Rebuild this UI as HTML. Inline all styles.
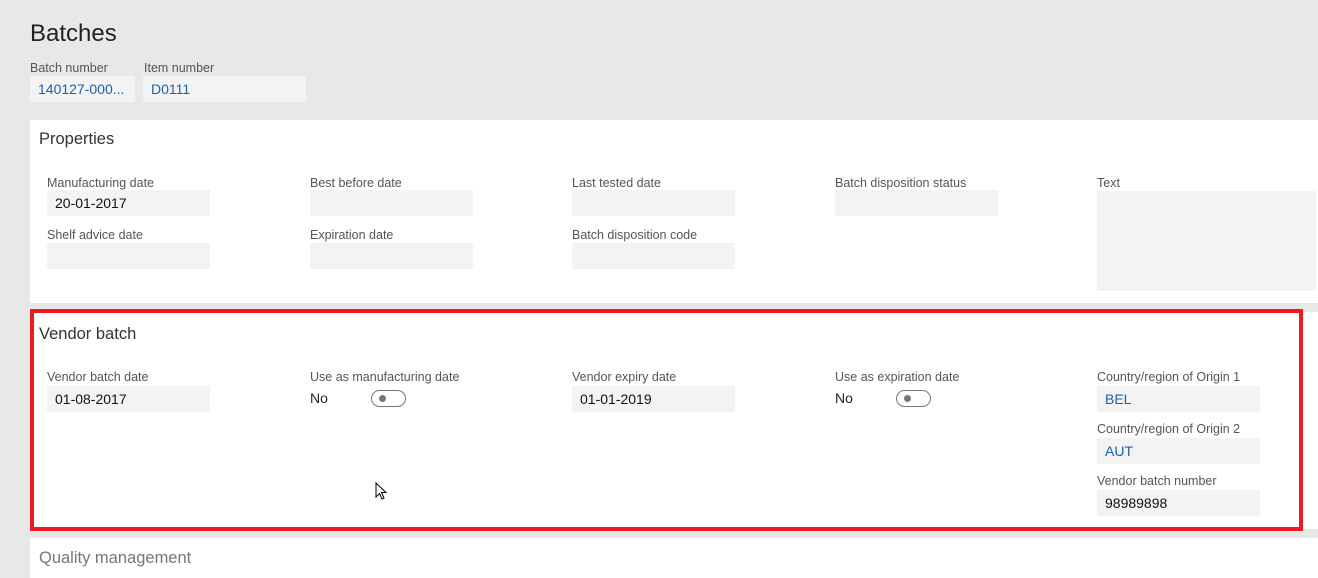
<!DOCTYPE html>
<html><head><meta charset="utf-8"><style>
*{margin:0;padding:0;box-sizing:border-box}
body{width:1318px;height:575px;background:#e8e8e8;position:relative;overflow:hidden;font-family:"Liberation Sans",sans-serif}
.a{position:absolute}
.lbl{position:absolute;font-size:12.5px;color:#555;white-space:nowrap}
.box{position:absolute;background:#f3f3f3;width:163px;height:26px;font-size:14px;color:#111;padding:5px 0 0 8px;white-space:nowrap}
.blue{color:#1f5fa8}
.panel{position:absolute;background:#fff}
.h{position:absolute;font-size:16.5px;color:#333}
.tog{position:absolute;width:35px;height:17px;border:1px solid #777;border-radius:9px}
.tog:after{content:"";position:absolute;left:7px;top:4px;width:7px;height:7px;border-radius:50%;background:#777}
.no{position:absolute;font-size:14px;color:#222}
</style></head><body>
<div class="a" style="left:30px;top:20px;font-size:24px;color:#222">Batches</div>
<div class="lbl" style="left:30px;top:61px">Batch number</div>
<div class="lbl" style="left:144px;top:61px">Item number</div>
<div class="box blue" style="left:30px;top:76px;width:105px">140127-000...</div>
<div class="box blue" style="left:143px;top:76px;width:163px">D0111</div>

<div class="panel" style="left:30px;top:120px;width:1288px;height:183px"></div>
<div class="h" style="left:39px;top:130px">Properties</div>
<div class="lbl" style="left:47px;top:176px">Manufacturing date</div>
<div class="box" style="left:47px;top:190px">20-01-2017</div>
<div class="lbl" style="left:310px;top:176px">Best before date</div>
<div class="box" style="left:310px;top:190px"></div>
<div class="lbl" style="left:572px;top:176px">Last tested date</div>
<div class="box" style="left:572px;top:190px"></div>
<div class="lbl" style="left:835px;top:176px">Batch disposition status</div>
<div class="box" style="left:835px;top:190px"></div>
<div class="lbl" style="left:1097px;top:176px">Text</div>
<div class="box" style="left:1097px;top:191px;width:219px;height:100px"></div>
<div class="lbl" style="left:47px;top:228px">Shelf advice date</div>
<div class="box" style="left:47px;top:243px"></div>
<div class="lbl" style="left:310px;top:228px">Expiration date</div>
<div class="box" style="left:310px;top:243px"></div>
<div class="lbl" style="left:572px;top:228px">Batch disposition code</div>
<div class="box" style="left:572px;top:243px"></div>

<div class="panel" style="left:30px;top:312px;width:1288px;height:217px"></div>
<div class="a" style="left:30px;top:309px;width:1273px;height:222px;border:4px solid #ed1c24"></div>
<div class="h" style="left:39px;top:325px">Vendor batch</div>
<div class="lbl" style="left:47px;top:370px">Vendor batch date</div>
<div class="box" style="left:47px;top:386px">01-08-2017</div>
<div class="lbl" style="left:310px;top:370px">Use as manufacturing date</div>
<div class="no" style="left:310px;top:390px">No</div>
<div class="tog" style="left:371px;top:390px"></div>
<div class="lbl" style="left:572px;top:370px">Vendor expiry date</div>
<div class="box" style="left:572px;top:386px">01-01-2019</div>
<div class="lbl" style="left:835px;top:370px">Use as expiration date</div>
<div class="no" style="left:835px;top:390px">No</div>
<div class="tog" style="left:896px;top:390px"></div>
<div class="lbl" style="left:1097px;top:370px">Country/region of Origin 1</div>
<div class="box blue" style="left:1097px;top:386px">BEL</div>
<div class="lbl" style="left:1097px;top:422px">Country/region of Origin 2</div>
<div class="box blue" style="left:1097px;top:438px">AUT</div>
<div class="lbl" style="left:1097px;top:474px">Vendor batch number</div>
<div class="box" style="left:1097px;top:490px">98989898</div>
<svg class="a" style="left:375px;top:482px" width="14" height="20" viewBox="0 0 14 20"><path d="M1 1 L1 15 L4.5 11.5 L7 17 L9 16 L6.5 10.5 L11 10.5 Z" fill="#fff" stroke="#000" stroke-width="1"/></svg>

<div class="panel" style="left:30px;top:538px;width:1288px;height:40px"></div>
<div class="h" style="left:39px;top:549px;color:#777">Quality management</div>
</body></html>
